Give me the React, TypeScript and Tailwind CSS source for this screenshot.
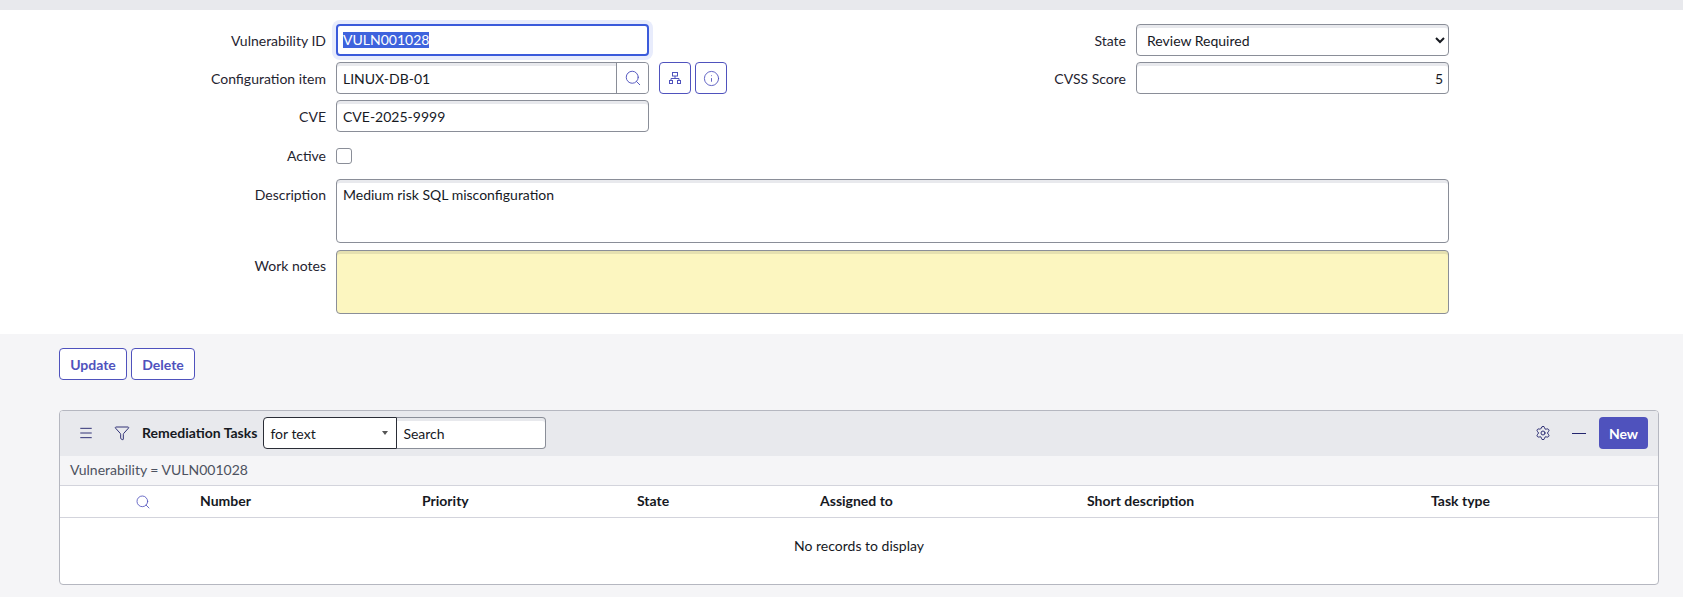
import React from 'react';
import { Search, Info, Menu, Filter, Settings } from 'lucide-react';

const fieldClass =
  'h-8 rounded-[4px] border border-[#8a8e98] bg-white shadow-[inset_0_3px_0_#e8e9ed] text-[14px] text-[#16191f] flex items-center px-[6px]';

const Label: React.FC<{ text: string; className?: string }> = ({ text, className = '' }) => (
  <div className={`w-[336px] shrink-0 text-right text-[14px] text-[#1f2430] pr-[10px] ${className}`}>{text}</div>
);

const IconButton: React.FC<{ children: React.ReactNode }> = ({ children }) => (
  <button className="w-8 h-8 rounded-[4px] border border-[#4f52bd] bg-white flex items-center justify-center text-[#4f52bd]">
    {children}
  </button>
);

const HierarchyIcon = () => (
  <svg width="14" height="14" viewBox="0 0 14 14" fill="none" stroke="currentColor" strokeWidth="1">
    <rect x="4.5" y="1.5" width="5" height="3.5" />
    <path d="M7 5v2.5M3 9.5v-2h8v2" />
    <rect x="1.5" y="9.5" width="3" height="3" />
    <rect x="9.5" y="9.5" width="3" height="3" />
  </svg>
);

const columns = [
  { name: 'Number', className: 'w-[222px]' },
  { name: 'Priority', className: 'w-[215px]' },
  { name: 'State', className: 'w-[183px]' },
  { name: 'Assigned to', className: 'w-[267px]' },
  { name: 'Short description', className: 'w-[344px]' },
  { name: 'Task type', className: 'flex-1' },
];

export default function App() {
  return (
    <div className="h-[597px] bg-[#f5f5f7] font-['Lato','Liberation_Sans',sans-serif] overflow-hidden">
      <div className="h-[10px] bg-[#e8e9ed]" />

      <div className="bg-white h-[324px] pt-[14px]">
        <div className="flex">
          {/* left column */}
          <div className="w-[800px] flex flex-col">
            <div className="flex items-center h-8">
              <Label text="Vulnerability ID" />
              <div className="w-[313px] h-8 rounded-[4px] border-2 border-[#3b5bdb] shadow-[0_0_0_4px_#e8ecfc] bg-white text-[14px] text-[#16191f] flex items-center px-[5px]">
                <span className="bg-[#3e63dd] text-white leading-[16px]">VULN001028</span>
              </div>
            </div>
            <div className="flex items-center h-8 mt-[6px]">
              <Label text="Configuration item" />
              <div className={`${fieldClass} w-[313px] !px-0`}>
                <span className="flex-1 pl-[6px]">LINUX-DB-01</span>
                <span className="w-[32px] h-full border-l border-[#8a8e98] bg-white rounded-r-[4px] flex items-center justify-center text-[#4f52bd]">
                  <Search size={18} strokeWidth={1.25} />
                </span>
              </div>
              <div className="flex gap-1 ml-[10px]">
                <IconButton><HierarchyIcon /></IconButton>
                <IconButton><Info size={17} strokeWidth={1.25} /></IconButton>
              </div>
            </div>
            <div className="flex items-center h-8 mt-[6px]">
              <Label text="CVE" />
              <div className={`${fieldClass} w-[313px]`}>CVE-2025-9999</div>
            </div>
          </div>

          {/* right column */}
          <div className="flex flex-col">
            <div className="flex items-center h-8">
              <Label text="State" />
              <select
                defaultValue="Review Required"
                className="w-[313px] h-8 rounded-[4px] border border-[#8a8e98] bg-white shadow-[inset_0_3px_0_#e8e9ed] text-[14px] text-[#16191f] pl-[6px]"
              >
                <option>Review Required</option>
              </select>
            </div>
            <div className="flex items-center h-8 mt-[6px]">
              <Label text="CVSS Score" />
              <div className={`${fieldClass} w-[313px] justify-end !px-[5px]`}>5</div>
            </div>
          </div>
        </div>

        <div className="flex items-center h-4 mt-[16px]">
          <Label text="Active" className="-translate-y-px" />
          <div className="w-4 h-4 rounded-[3px] border border-[#8a8e98] bg-white" />
        </div>

        <div className="flex mt-[15px]">
          <Label text="Description" className="pt-[5px]" />
          <div className="w-[1113px] h-[64px] rounded-[4px] border border-[#8a8e98] bg-white shadow-[inset_0_3px_0_#e8e9ed] text-[14px] text-[#16191f] px-[6px] pt-[4px]">
            Medium risk SQL misconfiguration
          </div>
        </div>

        <div className="flex mt-[7px]">
          <Label text="Work notes" className="pt-[5px]" />
          <div className="w-[1113px] h-[64px] rounded-[4px] border border-[#8a8e98] bg-[#fcf6c0] shadow-[inset_0_3px_0_#e5e0b0]" />
        </div>
      </div>

      <div className="flex gap-1 pl-[59px] mt-[14px]">
        <button className="h-8 w-[68px] rounded-[4px] border border-[#4f52bd] bg-white text-[14px] font-bold text-[#4f52bd]">Update</button>
        <button className="h-8 w-[64px] rounded-[4px] border border-[#4f52bd] bg-white text-[14px] font-bold text-[#4f52bd]">Delete</button>
      </div>

      <div className="ml-[59px] mt-[30px] w-[1600px] h-[175px] rounded-[4px] border border-[#b5b7c0] bg-white overflow-hidden">
        <div className="h-[45px] bg-[#e8e9ed] flex items-center pl-[18px] pr-[10px] pb-[1px]">
          <Menu size={16} strokeWidth={1.4} className="text-[#23256e]" />
          <Filter size={16} strokeWidth={1.4} className="text-[#23256e] ml-[20px]" />
          <span className="ml-[12px] pb-[1px] text-[14px] font-bold text-[#16191f]">Remediation Tasks</span>
          <div className="ml-[6px] w-[134px] h-8 rounded-l-[4px] border border-[#2a2d36] bg-white text-[14px] text-[#16191f] flex items-center justify-between pl-[6px] pr-[8px]">
            for text
            <span className="w-0 h-0 border-x-[3px] border-x-transparent border-t-[4px] border-t-[#555]" />
          </div>
          <div className={`${fieldClass} w-[149px] rounded-l-none border-l-0 text-[#5c606b]`}>Search</div>
          <div className="flex-1" />
          <Settings size={16} strokeWidth={1.4} className="text-[#23256e]" />
          <div className="w-[14px] h-px bg-[#23256e] ml-[21px]" />
          <button className="ml-[13px] w-[49px] h-8 rounded-[4px] bg-[#4f52bd] text-white text-[14px] font-bold">New</button>
        </div>
        <div className="h-[29px] bg-[#f5f5f7] flex items-center pl-[10px] pb-[2px] text-[14px] text-[#4d5260]">
          Vulnerability = VULN001028
        </div>
        <div className="h-[33px] border-y border-[#d3d4dc] flex items-center">
          <div className="w-[140px] pl-[75px] text-[#4f52bd]">
            <Search size={16} strokeWidth={1.25} />
          </div>
          {columns.map(col => (
            <div key={col.name} className={`pb-[2px] text-[14px] font-bold text-[#16191f] ${col.className}`}>
              {col.name}
            </div>
          ))}
        </div>
        <div className="h-[66px] pb-[12px] flex items-center justify-center text-[14px] text-[#16191f]">No records to display</div>
      </div>
    </div>
  );
}
